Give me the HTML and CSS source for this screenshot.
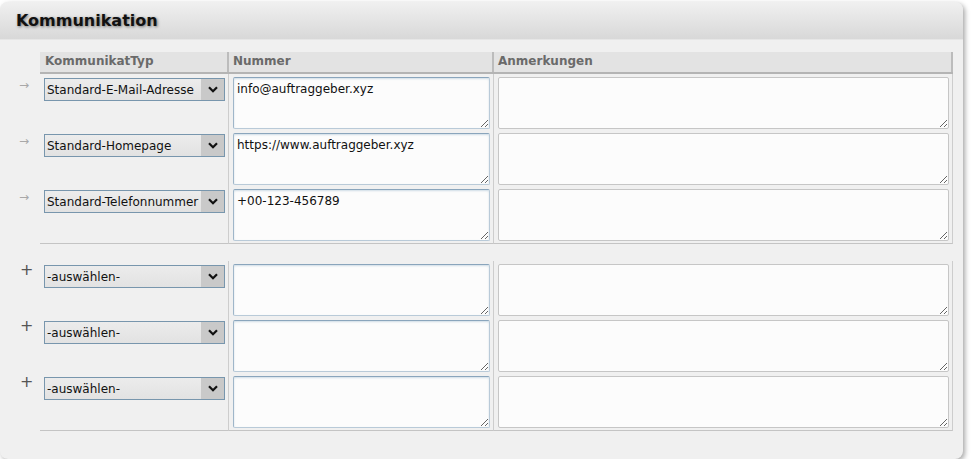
FILE: index.html
```html
<!DOCTYPE html>
<html lang="de">
<head>
<meta charset="utf-8">
<title>Kommunikation</title>
<link rel="stylesheet" href="styles.css">
</head>
<body>
<div class="panel">
  <div class="panel-head"><h2 class="panel-title">Kommunikation</h2></div>
  <div class="panel-body">
    <div class="thead">
      <div class="th">KommunikatTyp</div>
      <div class="th">Nummer</div>
      <div class="th">Anmerkungen</div>
    </div>

    <div class="group">
      <div class="row">
        <div class="gutter"><span class="ico-arrow">→</span></div>
        <div class="cell c1"><span class="sel"><select class="select"><option>Standard-E-Mail-Adresse</option></select><span class="sel-btn"><svg width="10" height="7" viewBox="0 0 10 7"><path d="M1 1.2 L5 5.2 L9 1.2" fill="none" stroke="#111" stroke-width="2.2"/></svg></span></span></div>
        <div class="cell c2"><textarea class="ta ta-num">info@auftraggeber.xyz</textarea></div>
        <div class="cell c3"><textarea class="ta ta-note"></textarea></div>
      </div>
      <div class="row">
        <div class="gutter"><span class="ico-arrow">→</span></div>
        <div class="cell c1"><span class="sel"><select class="select"><option>Standard-Homepage</option></select><span class="sel-btn"><svg width="10" height="7" viewBox="0 0 10 7"><path d="M1 1.2 L5 5.2 L9 1.2" fill="none" stroke="#111" stroke-width="2.2"/></svg></span></span></div>
        <div class="cell c2"><textarea class="ta ta-num">https://www.auftraggeber.xyz</textarea></div>
        <div class="cell c3"><textarea class="ta ta-note"></textarea></div>
      </div>
      <div class="row">
        <div class="gutter"><span class="ico-arrow">→</span></div>
        <div class="cell c1"><span class="sel"><select class="select"><option>Standard-Telefonnummer</option></select><span class="sel-btn"><svg width="10" height="7" viewBox="0 0 10 7"><path d="M1 1.2 L5 5.2 L9 1.2" fill="none" stroke="#111" stroke-width="2.2"/></svg></span></span></div>
        <div class="cell c2"><textarea class="ta ta-num">+00-123-456789</textarea></div>
        <div class="cell c3"><textarea class="ta ta-note"></textarea></div>
      </div>
    </div>

    <div class="group group-new">
      <div class="row">
        <div class="gutter"><span class="ico-plus">+</span></div>
        <div class="cell c1"><span class="sel"><select class="select"><option>-auswählen-</option></select><span class="sel-btn"><svg width="10" height="7" viewBox="0 0 10 7"><path d="M1 1.2 L5 5.2 L9 1.2" fill="none" stroke="#111" stroke-width="2.2"/></svg></span></span></div>
        <div class="cell c2"><textarea class="ta ta-num"></textarea></div>
        <div class="cell c3"><textarea class="ta ta-note"></textarea></div>
      </div>
      <div class="row">
        <div class="gutter"><span class="ico-plus">+</span></div>
        <div class="cell c1"><span class="sel"><select class="select"><option>-auswählen-</option></select><span class="sel-btn"><svg width="10" height="7" viewBox="0 0 10 7"><path d="M1 1.2 L5 5.2 L9 1.2" fill="none" stroke="#111" stroke-width="2.2"/></svg></span></span></div>
        <div class="cell c2"><textarea class="ta ta-num"></textarea></div>
        <div class="cell c3"><textarea class="ta ta-note"></textarea></div>
      </div>
      <div class="row">
        <div class="gutter"><span class="ico-plus">+</span></div>
        <div class="cell c1"><span class="sel"><select class="select"><option>-auswählen-</option></select><span class="sel-btn"><svg width="10" height="7" viewBox="0 0 10 7"><path d="M1 1.2 L5 5.2 L9 1.2" fill="none" stroke="#111" stroke-width="2.2"/></svg></span></span></div>
        <div class="cell c2"><textarea class="ta ta-num"></textarea></div>
        <div class="cell c3"><textarea class="ta ta-note"></textarea></div>
      </div>
    </div>
  </div>
</div>
</body>
</html>
```

FILE: styles.css
```css
* { box-sizing: border-box; }
html, body { margin: 0; padding: 0; background: #ffffff; }
body { font-family: "DejaVu Sans", Verdana, sans-serif; font-size: 12px; color: #111; }

.panel {
  margin-top: 2px;
  width: 963px;
  height: 457px;
  background: #f0f0f0;
  border-radius: 8px;
  box-shadow: 2px 2px 5px rgba(0, 0, 0, 0.35);
}

.panel-head {
  height: 38px;
  border-radius: 8px 8px 0 0;
  background: linear-gradient(#f0f0f0, #d8d8d8);
  border-bottom: 1px solid #e6e6e6;
  padding-left: 16px;
}
.panel-title {
  margin: 0;
  font-size: 16px;
  font-weight: bold;
  line-height: 38px;
  color: #111;
  text-shadow: 1px 1px 3px rgba(0, 0, 0, 0.5);
}

.panel-body { padding-top: 12px; }

.thead {
  margin-left: 40px;
  width: 913px;
  display: grid;
  grid-template-columns: 189px 265px 459px;
  height: 22px;
  background: #e3e3e3;
  border-bottom: 2px solid #b4b4b4;
}
.th {
  font-weight: bold;
  color: #6a6a6a;
  line-height: 19px;
  padding-left: 4px;
  border-right: 2px solid #bcbcbc;
}
.th:first-child { padding-left: 5px; }

.row {
  display: grid;
  grid-template-columns: 40px 189px 265px 459px;
}
.gutter { position: relative; }
.cell {
  border-right: 1px solid #cdcdcd;
  padding: 3px 0 1px 4px;
}
.group .row:last-child .cell { border-bottom: 1px solid #c4c4c4; padding-bottom: 2px; }
.group-new { margin-top: 17px; }

.ico-arrow {
  display: block;
  padding: 5px 0 0 19px;
  font-size: 12px;
  line-height: 12px;
  color: #a8a8a8;
}
.ico-plus {
  display: block;
  padding: 1px 0 0 20px;
  font-size: 16px;
  line-height: 16px;
  color: #555;
  font-weight: normal;
}

.sel {
  position: relative;
  display: block;
  width: 181px;
  height: 23px;
  margin-top: 1px;
}
.select {
  -webkit-appearance: none;
  appearance: none;
  display: block;
  width: 181px;
  height: 23px;
  margin: 0;
  border: 1px solid #7896ad;
  border-radius: 0;
  background: linear-gradient(#ececec, #e2e2e2);
  font-family: "DejaVu Sans", Verdana, sans-serif;
  font-size: 12px;
  color: #111;
  padding: 0 24px 0 2px;
  outline: none;
}
.sel-btn {
  position: absolute;
  right: 1px;
  top: 1px;
  bottom: 1px;
  width: 23px;
  background: #c9c9c9;
  display: flex;
  align-items: center;
  justify-content: center;
  pointer-events: none;
}

.ta {
  display: block;
  height: 52px;
  margin: 0;
  resize: both;
  font-family: "DejaVu Sans", Verdana, sans-serif;
  font-size: 12px;
  color: #111;
  background: #fcfcfc;
  padding: 4px 3px 2px;
  outline: none;
  overflow: hidden;
}
.ta-num {
  width: 257px;
  border: 1px solid #b9cad8;
  border-top-color: #8aa5bc;
  border-left-color: #9fb6c9;
  border-radius: 2px;
  box-shadow: inset 0 1px 2px rgba(120, 160, 190, 0.35);
}
.ta-note {
  width: 451px;
  border: 1px solid #c6c6c6;
  border-radius: 2px;
}
```
